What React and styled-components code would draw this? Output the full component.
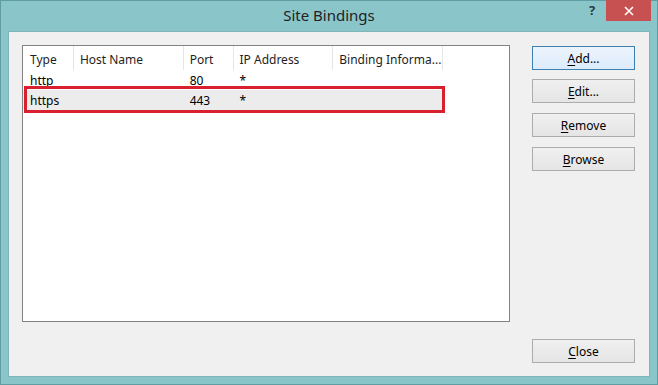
import React from 'react'
import styled, { createGlobalStyle } from 'styled-components'

const GlobalStyle = createGlobalStyle`
    html, body {
        margin: 0;
        padding: 0;
        background: #8ac5ca;
    }
    body {
        font-family: "Noto Sans", "Open Sans", sans-serif;
        font-size: 12px;
        color: #000;
    }
`

const Window = styled.div`
    width: 658px;
    height: 385px;
    box-sizing: border-box;
    border: 1px solid #5f9da2;
    background: #8ac5ca;
    display: flex;
    flex-direction: column;
`
const TitleBar = styled.div`
    height: 30px;
    display: grid;
    grid-template-columns: 1fr auto 1fr;
    align-items: start;
`
const Title = styled.div`
    grid-column: 2;
    font-size: 15px;
    color: #222;
    line-height: 28px;
`
const Controls = styled.div`
    grid-column: 3;
    justify-self: end;
    display: flex;
    align-items: flex-start;
    margin-right: 6px;
    margin-top: -1px;
`
const HelpButton = styled.div`
    width: 28px;
    height: 20px;
    display: flex;
    align-items: center;
    justify-content: center;
    font-weight: bold;
    font-size: 13px;
    color: #2a3b44;
`
const CloseButton = styled.div`
    width: 45px;
    height: 21px;
    background: #c75050;
    display: flex;
    align-items: center;
    justify-content: center;
`
const Client = styled.div`
    flex: 1;
    margin: 0 7px 7px 7px;
    background: #f0f0f0;
    border: 1px solid #7fb5b9;
    padding: 13px 14px 13px 13px;
    display: flex;
    gap: 22px;
`
const ListView = styled.div`
    position: relative;
    width: 486px;
    height: 275px;
    background: #fff;
    border: 1px solid #828282;
`
const Row = styled.div`
    display: flex;
    height: ${p => (p.header ? '24px' : '20px')};
    width: 420px;
    background: ${p => (p.selected ? '#ececec' : 'transparent')};
`
const Cell = styled.div`
    width: ${p => p.w}px;
    height: 100%;
    box-sizing: border-box;
    padding-top: ${p => (p.header ? 2 : 1)}px;
    line-height: ${p => (p.header ? '24px' : '20px')};
    padding-left: ${p => (p.first ? 7 : 6)}px;
    white-space: nowrap;
    color: ${p => (p.header ? '#1e1e1e' : '#000')};
    border-right: ${p => (p.header ? '1px solid #e5e5e5' : 'none')};
`
const Highlight = styled.div`
    position: absolute;
    left: 1px;
    top: 40px;
    width: 415px;
    height: 21px;
    border: 3px solid #d9202e;
    pointer-events: none;
`
const Side = styled.div`
    width: 103px;
    display: flex;
    flex-direction: column;
    padding-top: 1px;
`
const Button = styled.div`
    height: 24px;
    box-sizing: border-box;
    margin-top: ${p => p.gap || 0}px;
    border: 1px solid ${p => (p.primary ? '#3c7fb1' : '#acacac')};
    background: ${p => (p.primary
        ? 'linear-gradient(#ecf4fc, #dcecfc)'
        : 'linear-gradient(#f0f0f0, #e5e5e5)')};
    display: flex;
    align-items: center;
    justify-content: center;
    padding-top: 1px;
    color: #000;
    u {
        text-decoration-thickness: 1px;
        text-underline-offset: 2px;
    }
`
const CloseWrap = styled.div`
    margin-top: auto;
`

const columns = [
    { name: 'Type', w: 51 },
    { name: 'Host Name', w: 110 },
    { name: 'Port', w: 50 },
    { name: 'IP Address', w: 100 },
    { name: 'Binding Informa...', w: 110 },
]

const bindings = [
    ['http', '', '80', '*', ''],
    ['https', '', '443', '*', ''],
]

const App = () => {
    return (
        <Window>
            <GlobalStyle />
            <TitleBar>
                <Title>Site Bindings</Title>
                <Controls>
                    <HelpButton>?</HelpButton>
                    <CloseButton>
                        <svg width="10" height="10" viewBox="0 0 10 10">
                            <path d="M1 1 L9 9 M9 1 L1 9" stroke="#fff" strokeWidth="1.6" />
                        </svg>
                    </CloseButton>
                </Controls>
            </TitleBar>
            <Client>
                <ListView>
                    <Row header>
                        {columns.map((c, i) => (
                            <Cell header key={c.name} w={c.w} first={i === 0}>{c.name}</Cell>
                        ))}
                    </Row>
                    {bindings.map((b, r) => (
                        <Row key={r} selected={r === 1}>
                            {b.map((v, i) => (
                                <Cell key={i} w={columns[i].w} first={i === 0}>{v}</Cell>
                            ))}
                        </Row>
                    ))}
                    <Highlight />
                </ListView>
                <Side>
                    <Button primary><span><u>A</u>dd...</span></Button>
                    <Button gap={9}><span><u>E</u>dit...</span></Button>
                    <Button gap={10}><span><u>R</u>emove</span></Button>
                    <Button gap={10}><span><u>B</u>rowse</span></Button>
                    <CloseWrap>
                        <Button><span><u>C</u>lose</span></Button>
                    </CloseWrap>
                </Side>
            </Client>
        </Window>
    )
}

export default App
